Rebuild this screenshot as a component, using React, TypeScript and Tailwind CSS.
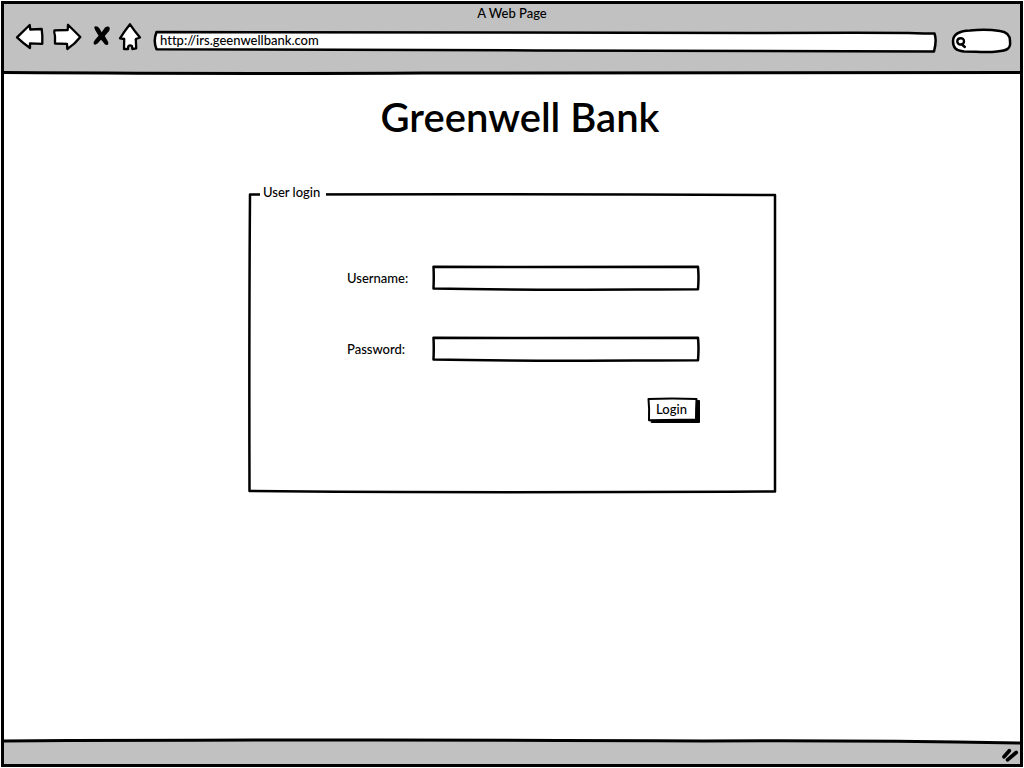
import type { ReactNode } from "react";

type OutlineProps = {
  box: string;
  d: string;
  fill?: string;
  width?: number;
};

/* Hand-drawn outline that stretches with the element it decorates. */
function Outline({ box, d, fill = "none", width = 3 }: OutlineProps) {
  return (
    <svg
      aria-hidden="true"
      viewBox={box}
      preserveAspectRatio="none"
      className="pointer-events-none absolute inset-0 h-full w-full overflow-visible"
    >
      <path
        d={d}
        fill={fill}
        stroke="#000"
        strokeWidth={width}
        strokeLinejoin="round"
        strokeLinecap="round"
        vectorEffect="non-scaling-stroke"
      />
    </svg>
  );
}

function ToolButton({ label, children }: { label: string; children: ReactNode }) {
  return (
    <button type="button" aria-label={label} className="shrink-0">
      {children}
    </button>
  );
}

function Toolbar() {
  const icon = {
    fill: "#fff",
    stroke: "#000",
    strokeWidth: 2.3,
    strokeLinejoin: "round" as const,
    strokeLinecap: "round" as const,
  };
  return (
    <header className="relative h-[70px] bg-[#c1c1c1]">
      <p className="text-center text-[13px] leading-[18px]">A Web Page</p>
      <div className="flex gap-1.5 pr-2 pl-2.5">
        <ToolButton label="Back">
          <svg viewBox="14 22 32 32" className="block h-8 w-8" {...icon}>
            <path d="M17 37.3 L29.7 25 L30.3 29.5 L41.7 29 Q42.7 36 42.3 43.8 L30 43.3 L30 48 Q23 43 17 37.3Z" />
          </svg>
        </ToolButton>
        <ToolButton label="Forward">
          <svg viewBox="52 22 32 32" className="block h-8 w-8" {...icon}>
            <path d="M80.3 37 L68 24.8 L67.7 30 L54.5 30.3 Q53.7 32 55 36 L55 43.5 L67 43.8 L67.3 49 Q75 44 80.3 37Z" />
          </svg>
        </ToolButton>
        <ToolButton label="Stop">
          <svg viewBox="90 22 22 32" className="block h-8 w-[22px]">
            <path
              d="M94.7 26.5 Q97.5 25.8 99.5 28.5 L101.7 32.3 L105 27.6 Q107.3 25.8 109 26.8 Q110.5 28 109.3 30.8 L104.8 36 L108.2 42 Q108.8 45 106.8 45 Q105 45.1 103.5 42.5 L101 39.7 L97.5 43.5 Q95 45.5 93.7 44 Q93 42 95.3 39.5 L98.6 35.7 L95 29.7 Q93.7 27 94.7 26.5Z"
              fill="#000"
            />
          </svg>
        </ToolButton>
        <ToolButton label="Home">
          <svg viewBox="118 22 28 32" className="block h-8 w-7" {...icon}>
            <path d="M130 24.3 Q125 30.5 120 38.3 L124.2 39 L124 49 L128 49 L128.3 46.3 Q130 44.5 132 46.2 L132.3 49 L136.2 48.3 L135.8 39 L140 37.5 Q134.5 31 130 24.3Z" />
          </svg>
        </ToolButton>
        <div className="relative mt-2 h-6 min-w-0 flex-1">
          <Outline
            box="0 0 786 24"
            width={2.5}
            fill="#fff"
            d="M4.500 2 C200 2 400 3.500 600 3 S740 3 782.500 3.500 Q785 10 782 21.500 C600 21.500 200 19.500 4.500 19.300 Q1 11 4.500 2Z"
          />
          <input
            aria-label="Address"
            type="text"
            defaultValue="http://irs.geenwellbank.com"
            className="relative block h-5 w-full bg-transparent pl-2 text-[13px] font-medium outline-none [font-variant-ligatures:none]"
          />
        </div>
        <div className="relative mt-1.5 ml-1.5 h-[26px] w-[62px] shrink-0">
          <Outline
            box="0 0 62 26"
            width={2.5}
            fill="#fff"
            d="M3 13 C3 7 9 3 20 2.500 C28 1.500 41 1.500 50 3 C58 4 60 8 60 13 C61 21 57 22.500 47 23.500 C36 25 26 23.500 14 23.500 C6 22.500 3 20 3 13Z"
          />
          <svg aria-hidden="true" viewBox="0 0 62 26" className="absolute inset-0 h-full w-full">
            <path
              d="M7.300 13 C7.500 9.500 14 9 14 13.300 C14 17.800 7 17.500 7.300 13Z M12 16.500 L14.800 19"
              fill="none"
              stroke="#000"
              strokeWidth="2.400"
              strokeLinecap="round"
            />
          </svg>
          <input
            aria-label="Search"
            type="search"
            className="relative block h-full w-full bg-transparent pr-2 pl-5 text-[13px] outline-none"
          />
        </div>
      </div>
      <Outline box="0 0 1017 70" d="M0 68.500 Q260 70 420 69 Q720 70 1017 68.500" />
    </header>
  );
}

function Field({ id, label, type }: { id: string; label: string; type: string }) {
  return (
    <div className="flex items-center">
      <label htmlFor={id} className="w-[85px] shrink-0 pt-0.5 text-[13px]">
        {label}
      </label>
      <div className="relative h-[26px] min-w-0 flex-1">
        <Outline
          box="0 0 268 26"
          width={2.5}
          d="M1.500 1.800 C90 2.300 170 1.300 266 1.800 Q267 12 266 24.300 C170 24.500 90 25.500 1.500 23.500 Q2 12 1.500 1.800Z"
        />
        <input
          id={id}
          type={type}
          className="relative block h-full w-full bg-transparent px-2 text-[13px] outline-none"
        />
      </div>
    </div>
  );
}

export default function App() {
  return (
    <div className="flex min-h-screen flex-col bg-white p-px font-['Lato',sans-serif] font-medium text-black">
      <div className="flex flex-1 flex-col border-[3px] border-black">
        <Toolbar />
        <main className="flex-1 px-6">
          <h1 className="mt-[19px] pl-4 text-center text-[40px] leading-[48px] font-semibold">
            Greenwell Bank
          </h1>
          <form
            className="relative mx-auto mt-[42px] w-full max-w-[528px]"
            onSubmit={(event) => event.preventDefault()}
          >
            <Outline
              box="0 0 528 309"
              width={2.5}
              d="M2 11.500 Q270 10.500 527 12 Q527.500 160 527 307.500 Q180 309 1.500 307 Q1 150 2 11.500Z"
            />
            <fieldset className="relative pr-[76px] pb-[69px] pl-[99px]">
              <legend className="-ml-[87px] h-[18px] bg-white pr-1.5 pl-[3px] text-[13px] leading-[18px]">
                User login
              </legend>
              <div className="mt-16 flex flex-col gap-[45px]">
                <Field id="username" label="Username:" type="text" />
                <Field id="password" label="Password:" type="password" />
              </div>
              <div className="mt-[35px] flex justify-end">
                <button
                  type="submit"
                  className="relative h-[27px] w-[53px] pr-1 pb-0.5 text-[13px]"
                >
                  <Outline
                    box="0 0 53 27"
                    width={1}
                    fill="#000"
                    d="M4.500 5 L52.500 3.500 L52.500 25.500 L4.500 25.500Z"
                  />
                  <Outline
                    box="0 0 53 27"
                    width={2}
                    fill="#fff"
                    d="M1.500 2 Q25 1 49.500 2 Q49 12 49 22.500 L2 23.300 Q2.500 12 1.500 2Z"
                  />
                  <span className="relative">Login</span>
                </button>
              </div>
            </fieldset>
          </form>
        </main>
        <footer className="relative flex h-[25px] items-end justify-end pb-px">
          <svg
            aria-hidden="true"
            viewBox="0 0 1017 25"
            preserveAspectRatio="none"
            className="absolute inset-0 h-full w-full overflow-visible"
          >
            <path d="M0 2 Q400 0 700 2 Q850 1 1017 4 L1017 25 L0 25Z" fill="#c1c1c1" />
            <path
              d="M0 2 Q400 0 700 2 Q850 1 1017 4"
              fill="none"
              stroke="#000"
              strokeWidth="3"
              vectorEffect="non-scaling-stroke"
            />
          </svg>
          <svg aria-hidden="true" viewBox="0 0 20 16" className="relative h-4 w-5">
            <path
              d="M4 9.800 L9.300 3.700 M7.500 12.800 L16.200 5.500"
              stroke="#000"
              strokeWidth="3.700"
              strokeLinecap="round"
            />
          </svg>
        </footer>
      </div>
    </div>
  );
}
